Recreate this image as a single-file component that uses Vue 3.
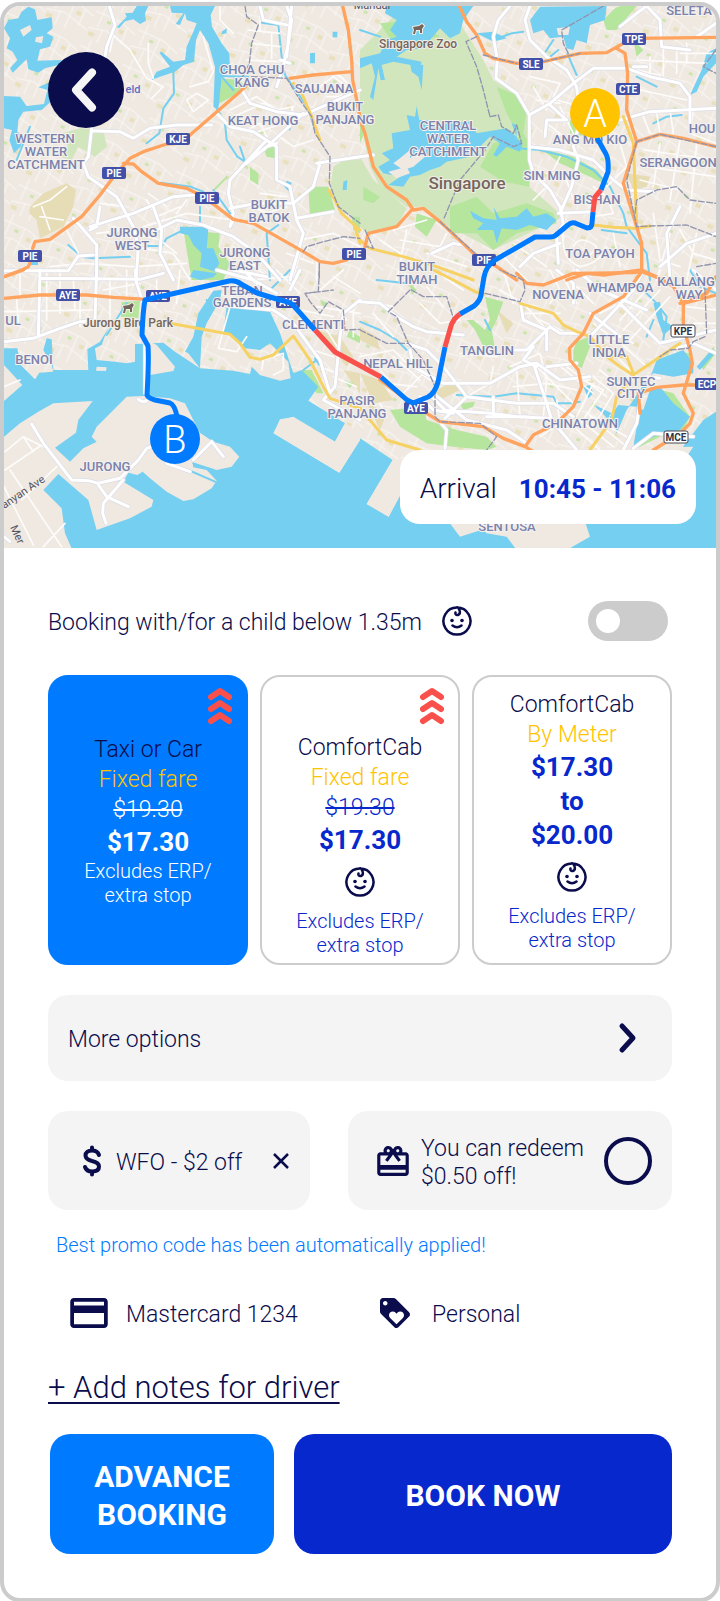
<template>
  <main class="booking">
    <section class="booking__map">
      <svg class="map" viewBox="4 6 712 542" role="img" aria-label="Route map">
        <defs>
          <pattern id="streets" width="46" height="38" patternUnits="userSpaceOnUse" patternTransform="rotate(24)">
            <path d="M0 9H28L46 15M0 27L18 23 46 30M8 0V23M24 9V38M36 12V30M14 23V38" fill="none" stroke="#f9f6f2" stroke-width="1" />
            <path d="M29 16h5v4h-5zM2 30h6v4h-6z" fill="#e9e0bd" />
            <path d="M15 13h4v3h-4z" fill="#cfe5b0" />
          </pattern>
        </defs>
        <rect class="map__land" x="0" y="0" width="720" height="560" />
        <rect class="map__streets" x="0" y="0" width="720" height="560" />
        <g v-for="layer in layers" :key="layer.name" :class="'map__' + layer.name">
          <path v-for="tile in tiles" :key="tile.id" :d="tile[layer.key]" :transform="`translate(${tile.x} ${tile.y}) scale(.33333)`" />
        </g>

        <g v-for="s in shields" :key="s.text + s.x" :class="['map__shield', { 'map__shield--white': s.white }]">
          <rect :x="s.x - 12" :y="s.y - 6" width="24" height="12" rx="2" />
          <text :x="s.x" :y="s.y + 4">{{ s.text }}</text>
        </g>
        <g class="map__labels">
          <text v-for="l in labels" :key="l[0] + l[1] + l[2]" :x="l[1]" :y="l[2]">{{ l[0] }}</text>
        </g>
        <g class="map__places">
          <text x="418" y="48">Singapore Zoo</text>
          <text x="128" y="327">Jurong Bird Park</text>
          <text class="map__country" x="467" y="189">Singapore</text>
          <path d="M413 27l6-1 3-2 2 2-2 3v4h-2v-3h-4l-1 4h-2l1-4z" />
          <path d="M123 306l6-1 3-2 2 2-2 3v4h-2v-3h-4l-1 4h-2l1-4z" />
        </g>
        <text class="map__field" x="133" y="93">eld</text>
        <text class="map__street" x="372" y="9">Mandai</text>
        <text class="map__street" transform="translate(25 495) rotate(-34)">anyan Ave</text>
        <text class="map__street" transform="translate(14 536) rotate(66)">Mer</text>

        <g class="map__route">
          <path d="M597 138L606 154Q609 160 608 172L601 190M593 212L592 223Q592 228 587 228L575 223Q571 222 568 225L556 235Q554 237 550 237H535L495 260Q486 266 484 277L481 295Q480 301 474 306L460 314M445 347L438 382Q435 393 428 397L413 403 407 400 381 377M315 330L293 305Q290 302 280 300L257 293 241 284Q236 280 229 281L145 300Q143 310 142 335L148 346Q149 360 147 395 148 398 155 400L170 403Q175 405 177 417" />
          <path class="map__route--busy" d="M601 190L595 197 593 212M460 314Q453 319 451 326L445 347M381 377L335 352 315 330" />
        </g>
        <g class="map__pin">
          <circle cx="595" cy="113" r="25" fill="#ffc300" />
          <text x="595" y="127">A</text>
          <circle cx="175" cy="439" r="25" fill="#007aff" />
          <text x="175" y="453">B</text>
        </g>
      </svg>
      <button class="booking__back" type="button" aria-label="Back">
        <svg width="76" height="76" viewBox="0 0 76 76">
          <path d="M44 20.500L28 38 44 55.500" fill="none" stroke="#f5f5f5" stroke-width="8" stroke-linecap="round" stroke-linejoin="round" />
        </svg>
      </button>
      <p class="booking__arrival">Arrival <strong>10:45 - 11:06</strong></p>
    </section>

    <section class="booking__sheet">
      <div class="child">
        <label for="child" class="child__label">Booking with/for a child below 1.35m</label>
        <svg class="baby" viewBox="0 0 30 30"><path :d="babyPath" /><circle cx="10" cy="14.500" r="1.800" /><circle cx="20" cy="14.500" r="1.800" /></svg>
        <input id="child" v-model="withChild" class="child__switch" type="checkbox" role="switch">
      </div>

      <div class="fares">
        <button v-for="fare in fares" :key="fare.id" type="button" :aria-pressed="selected === fare.id"
          :class="['fare', { 'fare--active': selected === fare.id, 'fare--low': fare.surge && fare.baby }]" @click="selected = fare.id">
          <svg v-if="fare.surge" class="fare__surge" viewBox="0 0 24 38">
            <path d="M3 10L12 4 21 10M3 22L12 16 21 22M3 34L12 28 21 34" />
          </svg>
          <span class="fare__name">{{ fare.name }}</span>
          <span class="fare__type">{{ fare.type }}</span>
          <s v-if="fare.old" class="fare__old">{{ fare.old }}</s>
          <strong v-for="p in fare.price" :key="p" class="fare__price">{{ p }}</strong>
          <svg v-if="fare.baby" class="baby fare__baby" viewBox="0 0 30 30"><path :d="babyPath" /><circle cx="10" cy="14.500" r="1.800" /><circle cx="20" cy="14.500" r="1.800" /></svg>
          <small class="fare__note">Excludes ERP/<br>extra stop</small>
        </button>
      </div>

      <button class="more" type="button">
        <span class="more__text">More options</span>
        <svg width="20" height="32" viewBox="0 0 20 32"><path d="M4 4L15 16 4 28" fill="none" stroke="#0a0c4c" stroke-width="5" stroke-linecap="round" stroke-linejoin="round" /></svg>
      </button>

      <div class="promos">
        <div class="promo">
          <svg width="20" height="32" viewBox="0 0 20 32"><path d="M17 10C16 7 13.500 5.500 10 5.500 6 5.500 3.500 7.500 3.500 10.500 3.500 13.500 6 15 10 16 14.500 17 17 18.500 17 21.500 17 24.500 14.500 26.500 10 26.500 6.500 26.500 4 25 3 22M10 2.500V5.500M10 26.500V29.500" fill="none" stroke="#0a0c4c" stroke-width="4" stroke-linecap="round" /></svg>
          <span class="promo__text">WFO - $2 off</span>
          <button class="promo__remove" type="button" aria-label="Remove promo">
            <svg width="18" height="18" viewBox="0 0 18 18"><path d="M2 2L16 16M16 2L2 16" stroke="#0a0c4c" stroke-width="2.500" /></svg>
          </button>
        </div>
        <div class="promo promo--redeem">
          <svg width="32" height="30" viewBox="2 2 20 19"><path fill="#0a0c4c" d="M20 6h-2.180c.110-.310.180-.650.180-1 0-1.660-1.340-3-3-3-1.050 0-1.960.540-2.500 1.350l-.500.670-.500-.680C10.960 2.540 10.050 2 9 2 7.340 2 6 3.340 6 5c0 .350.070.690.180 1H4c-1.110 0-1.990.890-1.990 2L2 19c0 1.110.890 2 2 2h16c1.110 0 2-.890 2-2V8c0-1.110-.890-2-2-2zm-5-2c.550 0 1 .450 1 1s-.450 1-1 1-1-.450-1-1 .450-1 1-1zM9 4c.550 0 1 .450 1 1s-.450 1-1 1-1-.450-1-1 .450-1 1-1zm11 15H4v-2h16v2zm0-5H4V8h5.080L7 10.830 8.620 12 11 8.760l1-1.360 1 1.360L15.380 12 17 10.830 14.920 8H20v6z" /></svg>
          <label for="redeem" class="promo__text">You can redeem $0.50 off!</label>
          <input id="redeem" v-model="redeem" class="promo__check" type="checkbox">
        </div>
      </div>
      <p class="hint">Best promo code has been automatically applied!</p>

      <div class="payment">
        <button class="payment__item" type="button">
          <svg width="38" height="30" viewBox="2 4 20 16"><path fill="#0a0c4c" d="M20 4H4c-1.110 0-1.990.890-1.990 2L2 18c0 1.110.890 2 2 2h16c1.110 0 2-.890 2-2V6c0-1.110-.890-2-2-2zm0 14H4v-6h16v6zm0-10H4V6h16v2z" /></svg>
          <span class="payment__text">Mastercard 1234</span>
        </button>
        <button class="payment__item payment__item--trip" type="button">
          <svg width="30" height="30" viewBox="2 2 20 20"><path fill="#0a0c4c" d="M21.410 11.580l-9-9C12.050 2.220 11.550 2 11 2H4c-1.100 0-2 .900-2 2v7c0 .550.220 1.050.590 1.420l9 9c.360.360.860.580 1.410.580.550 0 1.050-.220 1.410-.590l7-7c.370-.360.590-.860.590-1.410 0-.550-.230-1.060-.590-1.420zM5.500 7C4.670 7 4 6.330 4 5.500S4.670 4 5.500 4 7 4.670 7 5.500 6.330 7 5.500 7zm11.770 8.270L13 19.540l-4.270-4.270C8.280 14.810 8 14.190 8 13.500c0-1.380 1.120-2.500 2.500-2.500.690 0 1.320.280 1.770.740l.730.720.730-.730c.450-.450 1.080-.730 1.770-.730 1.380 0 2.500 1.120 2.500 2.500 0 .690-.280 1.320-.730 1.770z" /></svg>
          <span class="payment__text">Personal</span>
        </button>
      </div>

      <a class="notes" href="#notes">+ Add notes for driver</a>

      <div class="actions">
        <button class="actions__button actions__button--advance" type="button">ADVANCE BOOKING</button>
        <button class="actions__button" type="button">BOOK NOW</button>
      </div>
    </section>
  </main>
</template>


<script setup>
import { ref } from "vue"

const withChild = ref(false)
const redeem = ref(false)
const selected = ref("taxi")

const fares = ref([
  { id: 'taxi', name: 'Taxi or Car', type: 'Fixed fare', old: '$19.30', price: ['$17.30'], surge: true, baby: false },
  { id: 'fixed', name: 'ComfortCab', type: 'Fixed fare', old: '$19.30', price: ['$17.30'], surge: true, baby: true },
  { id: 'meter', name: 'ComfortCab', type: 'By Meter', old: '', price: ['$17.30', 'to', '$20.00'], surge: false, baby: true }
])

// face outline, curl and smile
const babyPath = 'M15 1.500A13.500 13.500 0 1 1 14.900 1.500M15.500 1.500C18 3 19 8 16 9 14 9.500 13 8 13.500 6.500M10.500 19.500Q15 23 19.500 19.500'

// drawn bottom to top, the key is the path of each tile
const layers = [
  { name: 'dry', key: 'dry' },
  { name: 'forest', key: 'forest' },
  { name: 'park', key: 'park' },
  { name: 'water', key: 'water' },
  { name: 'land', key: 'island' },
  { name: 'creek', key: 'creek' },
  { name: 'minor', key: 'minor' },
  { name: 'casing', key: 'road' },
  { name: 'road', key: 'road' },
  { name: 'yellow', key: 'yellow' },
  { name: 'express', key: 'express' },
  { name: 'rail', key: 'rail' }
]

// each tile is 360 wide and 270 or 280 high, paths use 3 units per pixel
const tiles = [
  {
    id: 'nw', x: 0, y: 0,
    dry: 'M90 620L130 580 200 550 228 570 220 620 190 680 120 715 110 660 88 640Z',
    forest: 'M185 400L240 385 310 390 320 440 285 470 235 440 215 480 180 470 205 440ZM1000 500L1030 480 1080 478V670L1020 625 990 570Z',
    park: 'M655 235L720 240 740 265 650 315ZM925 560L985 560 1005 630 930 650ZM550 690L660 700 655 740 690 790 670 840H575ZM790 440L830 430 825 475 800 470ZM750 500L775 520 775 555 750 540ZM1055 650H1080V700L1060 690ZM640 568L680 528 684 532 646 570Z',
    water: 'M12 85L25 60 55 55 65 35 85 20 105 28 112 60 155 52 158 85 140 100 160 110 150 140 120 148 112 182 185 180 175 195 135 205 115 218 85 208 80 178 38 218 30 205 52 180 38 155 20 145 30 115ZM12 288L60 290 80 318 132 312 142 270 115 262 145 248 155 255 152 305 125 330 70 335 55 360 52 395 70 410 62 440 42 460 28 420 36 390 12 385ZM350 82L380 50 375 40 398 38 410 18H445L435 40 438 62 420 72 400 58 375 64 358 84ZM510 18H645L632 45 636 80 665 130 688 160 690 215 665 230 655 330 640 320 645 200 625 130 600 90 588 120 582 185 550 195 525 215 480 230 455 240 470 215 510 200 478 158 485 155 520 185 555 180 560 140 580 95 590 70 560 60 555 40 540 75 527 72 550 40 515 38ZM665 95L680 85 680 100 665 103ZM998 95H1012V112H998ZM930 160L945 158 945 190 930 190ZM540 680L610 680 625 690 620 745 640 745 658 790 645 815 600 800 605 760 580 735 565 705 540 700ZM860 542L875 548 868 575 852 560ZM1030 545L1042 540 1040 570 1028 570ZM860 370L875 378 870 392 860 385ZM92 785H114V795H92Z',
    island: 'M60 90L90 75 95 90 70 110ZM108 112L130 108 126 130 105 125Z',
    creek: 'M520 215L522 280 490 325 478 400 440 430M645 315L675 370 680 420 712 470 735 485M785 68L835 75 845 170 855 225 925 325 945 390M660 228L745 230M665 230L700 270M480 548L575 560M600 620L600 670M440 738L485 738 500 715 540 695M205 735L245 770 280 775 390 770M720 440L735 485M570 560L610 575M640 570L690 640M810 840L800 700 835 675M50 480L90 380',
    minor: 'M660 10V60L700 100M330 155L340 105 390 150 440 235 490 260 455 295M445 130V190L460 235M745 90L840 100M755 130L840 140M740 180L840 185M780 90V60M815 100V175M690 330L770 290 830 330 880 320M700 350L790 310 860 345M690 370L760 400 850 370 880 350 875 320M740 390L780 370 800 410M570 260L625 245 640 215 610 110M560 300L590 280 625 300 580 335ZM300 610L370 620 380 650 310 670M440 600L470 650 540 620M430 680L560 640 700 660M400 740L520 760 570 840M150 800L250 790 400 800 560 790M200 690L240 770M340 680L430 710M960 260L1000 230 1040 260 1020 290 980 290M980 220Q1020 215 1040 250M900 720L1000 700 1080 740M860 760L940 790M700 740L800 830M880 830L900 760M950 840V780M780 580L860 590M760 620L800 640 860 620M840 410L880 440 940 420M100 620L150 600 200 560M120 650L190 660M125 620L150 690M530 640L560 600M445 580L500 620M290 700L370 690 480 720 530 760',
    road: 'M328 18L345 75 320 140 310 200M275 385L265 470 250 490 265 530 350 590 400 680 415 740 408 840M275 392L360 395 400 415 450 385 530 375 635 375M650 340L690 380 760 395 830 440 830 540 870 560 880 610 770 610 690 625M740 490L800 440 830 430M800 420L690 540 685 580 700 640 690 680 700 660M910 340L790 450M860 18L875 60 865 130 850 200 830 260M875 18L860 170M725 270L750 310 830 335 910 345 1080 270M220 655L290 735V840M12 812L205 812 235 768 280 765M270 680L400 640 520 590 640 580M470 690L530 660 610 675 700 710 770 760 840 840M460 620L485 690 480 760 520 840M880 610L890 660 910 700 870 840M950 490L1080 470M780 18L790 60 860 75M890 655L1000 635M960 490L940 560 880 610M300 620L290 680 270 690M840 180L870 190',
    yellow: 'M880 250L905 280 935 350 960 420M985 570L1005 600 1025 640 1080 690M1065 680L1080 730',
    express: 'M1028 18L1045 90 1055 180 1058 240 1080 350M870 235L940 225 1055 215M740 255L720 275 570 405 530 430 500 432 430 455 390 475 345 525 300 585 245 650 150 718 105 725 98 745M98 770L85 800 70 808 12 830M370 490L400 492 425 515 475 550 560 565 600 585 650 620 700 658 760 670 840 715 910 755 960 785 1000 790 1040 780',
    rail: 'M735 18L740 50 775 75 755 130 748 190 725 235M755 230L860 235 900 300 935 350 945 400 990 470 988 550 1015 620 1080 670M910 755L920 740 970 725 1030 710 1080 715M958 790V840'
  },
  {
    id: 'ne', x: 360, y: 0,
    dry: 'M350 640L410 690 400 730 340 700ZM800 520L870 530 860 560 820 570Z',
    forest: 'M0 150L120 30 300 70 370 180 400 240 480 290 510 350 508 560 610 650 400 750 240 665 190 620 140 620 60 560 30 500 0 360ZM0 470L40 540 140 625 110 680 20 700 0 680Z',
    park: 'M60 70L170 60 240 110 100 130ZM410 260L480 290 500 330 490 400 508 430V560L430 545 360 500 400 430 480 410 440 340ZM270 620L350 590 400 640 500 610 580 640 590 670 470 700 400 750 350 700 270 700ZM730 60L765 25 780 18H830L770 90 740 90ZM630 360L680 380 680 410 630 400ZM540 445L640 470 710 510 750 560 690 530 600 490ZM170 640L230 660 200 710 165 680ZM10 560L60 590 40 610 10 600ZM820 120L850 150 830 170ZM0 330L12 400 0 430Z',
    water: 'M80 18H340L310 60 300 100 270 115 240 85 210 120 190 145 140 150 110 170 185 185 180 200 100 185 65 195 75 240 62 240 55 205 40 300 30 290 45 230 35 190 0 205V175L60 160 80 120 110 110 90 90 110 60 75 40ZM150 190L190 195 185 270 175 230 155 215ZM510 60L540 20 740 18 735 60 690 75 680 130 650 120 640 150 620 145 610 110 570 115 550 90 520 100ZM95 400L150 390 140 345 165 350 170 318 178 360 210 360 190 375 330 365 350 400 440 385 470 410 455 370 470 375 470 415 488 430 480 455 440 440 410 470 400 465 420 430 390 410 360 440 330 470 260 485 240 500 210 510 180 525 150 530 130 560 85 555 120 530 70 520 55 500 90 480 65 460 100 445ZM330 632L370 655 410 660 400 620 420 655 470 650 500 625 520 650 560 640 590 660 560 690 510 675 470 690 425 685 410 730 400 690 350 690 370 670 340 655ZM350 100L400 95 440 115 400 125ZM1040 160L1068 145V190L1030 230 1010 275 990 285 1025 210Z',
    island: 'M120 475L150 450 150 475 190 440 195 470 160 500 130 510 100 490ZM85 515L140 500 150 520 110 535ZM590 85L630 80 625 105 595 105Z',
    creek: 'M580 120L550 165M595 150L570 170M622 160L650 225M475 445L540 450 620 470 700 510 750 560 790 640 800 680 860 760 870 840M400 120L455 100 490 95M880 370L920 350 965 345M830 230L890 260M725 690L800 700M0 90L60 110',
    minor: 'M510 230L600 250 580 290M530 300L600 310M520 260L560 330M600 320L640 400M590 300L700 330M560 370L600 400 590 430M780 430L800 500 740 560M850 350L870 400M890 340L900 400M930 330L940 400M840 270L980 300M830 180L1040 190M830 210L900 225M870 170V230M910 140V225M950 150V220M980 130V190M960 160H1068M1000 330L990 400 1068 430M850 450L1068 480M860 500L1068 530M840 540L960 570M900 430L880 560M960 420L930 600M1010 430L990 640M560 520L620 540 640 600M540 510L560 560 520 600M580 510L600 470M700 560L740 590 760 640 700 650M610 690Q600 780 660 800 720 790 740 740M640 740Q660 700 710 740 690 780 650 770M760 700L780 800M100 690L200 660M120 720L240 740 260 700M60 720L180 800M140 690L110 840M200 760L320 800M880 640L900 780 960 800M960 690L1000 760 1068 780M930 700L890 840M1010 700L980 840M420 760L500 840M460 730L560 800',
    road: 'M450 18L415 60 400 110 412 180 408 235 470 280 508 345V480L520 520 570 570 600 620 610 670 590 710 595 790M510 440L600 450 700 480 760 540 800 570M508 345L570 310 640 250 700 205 800 205 870 230 960 250 990 290V400M510 18L495 60 510 120 560 170 620 210 650 260M650 260L660 360 640 440 655 480 635 560 600 640M570 315L620 360 560 360 555 410M780 80L830 40 860 18 900 60 905 140 990 150M780 360L870 335 1068 325M1068 70L1010 110M800 570L880 575M960 620L920 700 930 840M820 200L860 200M600 730L520 760 480 800M215 760L280 730 310 735M1068 700L980 730 900 800M595 640L700 635M0 470L40 465',
    yellow: 'M700 675L760 682 825 685 870 678M0 720L30 745 130 770 230 800 340 840M790 350L820 430 830 670',
    express: 'M298 18L320 65 350 105 375 160 400 175 470 190 550 185 660 160 740 158 790 130 830 115 1068 112M770 145L795 160 803 220 800 330 830 425M830 425L900 403 970 415 1068 440M830 425L790 550 830 680 845 730 845 810 730 825 680 820 620 840M845 810L910 840M0 360L15 400 40 500 80 560 140 600 160 630 190 625 240 665 340 760 410 800 470 840M155 630L110 680 25 700 15 740',
    rail: 'M350 110L318 125 350 200 370 270 390 350M370 165L470 190M550 185L660 160M730 18L640 70 605 90 610 130 625 160M390 350L415 345 425 380 460 400 470 375 485 430 460 440 400 410 375 450 300 540 250 660M830 425L900 403 1068 440M830 425L800 540 830 680 870 678 980 675 1068 710M825 640L830 600 890 570 950 560 990 600 1068 610M240 665L345 760M1068 150L1030 200 1068 220M15 690L40 745 20 740M1010 800L1068 790'
  },
  {
    id: 'sw', x: 0, y: 270,
    dry: 'M950 180L1020 200 1060 260 1040 290ZM1080 310L1030 300 1080 370Z',
    forest: '',
    park: 'M365 97L420 92 415 145 362 140ZM570 0H670L650 30 600 30ZM905 300L935 300 970 370 950 370ZM1050 180L1080 200V220L1040 200ZM1030 330L1060 340 1050 355ZM960 90L985 100 970 110Z',
    water: 'M12 235L52 235 62 285 105 328 118 308 160 305 155 285 130 240 140 205 155 208 160 300 265 300 262 238 300 215 325 175 312 205 305 225 285 235 290 270 345 275 380 280 405 275V222L490 218 525 245 600 295 565 250 555 245 580 200 595 130 640 62 665 60 660 90 620 160 605 200 600 295 700 302 750 312 755 290 780 315 840 332 872 325 865 275 810 220 780 240 735 235 695 195 670 190 680 108 810 125 840 190 865 265 880 310 905 300 955 350 925 392 1035 460 1005 515 880 440 840 450 820 490 1018 608 1080 510V840H12ZM580 0L650 10 640 22 600 30 570 20Z',
    island: 'M822 490L840 448 880 442 1005 515 1035 460 1080 485V510L1018 608ZM12 285L67 345 12 393ZM450 215L470 225 525 290 520 303 450 315ZM290 290L320 292 318 303 288 302ZM785 280L850 270 855 310 820 320 785 300ZM12 500L60 460 115 425 160 400 278 393 235 450 228 488 165 533 210 575 250 535 290 515 275 500 290 470 380 380 430 378 510 385 555 400 580 450 600 488 640 515 690 530 718 560 695 590 650 600 578 580 580 592 620 600 650 632 635 655 580 688 550 693 500 665 450 625 428 605 412 615 385 608 370 635 460 690 455 710 390 745 290 780 265 690 175 612 130 660 185 715 195 790 217 840H12Z',
    creek: 'M320 195L380 100M580 580L640 600M565 600L645 635M870 0L810 60M945 265L975 310M910 300L950 270M620 90L640 110',
    minor: 'M60 0V80M140 0V150M180 0V130M220 30L225 120M330 30V150M380 0V80M470 30V100M12 125L280 120M50 90L55 160M240 60V170M540 0L530 100M655 235L690 110 720 110M655 235L710 245 740 200M785 300L790 270 850 250 850 300 820 315M830 0L900 70M760 30L870 20M900 120L1000 140M940 240L1000 260M960 290L1010 310M1000 320L1070 350M980 180L1030 260M1040 150L1010 110M950 110L1080 130M1030 0L960 60M12 350L60 330M15 600L125 525M15 545L70 500 130 530M70 500L100 545M30 600L185 830M12 650L100 825M65 690L170 590M130 830L195 760M310 60L420 40M1060 120V200M1000 20L1080 70',
    road: 'M95 462L130 520 215 630 265 632 295 640 360 625 415 570 440 535 520 505M295 645L320 680 385 710M370 630L310 700 308 730 318 760M500 580L570 605M580 570L635 515 670 560M290 0L285 150M120 0L115 200M12 215L100 205 180 175 240 155 290 150M120 25L420 28 490 10M405 0L410 40 430 100M435 210V370M415 388Q425 400 440 392M660 105L820 120 880 160 930 230 960 270 990 370M650 0L760 30 830 70M1080 90L1030 130 1020 200 1005 350 970 390 1080 450M12 800L30 815M730 0L770 40M870 60L900 0M700 0L800 20',
    yellow: 'M510 160L690 193 720 220 750 262 780 268 820 255 880 198 930 270 970 350 990 385 1080 415',
    express: 'M12 20L70 0M12 85L120 75 260 75 340 82 440 88',
    rail: 'M958 0L955 65 915 70 930 95 960 130 985 95 1030 120 1035 180 1080 178M918 70L1000 60'
  },
  {
    id: 'se', x: 360, y: 270,
    dry: 'M0 310L60 330 100 390 40 400ZM0 170L50 200 60 240 0 210ZM210 370L290 330 300 360 220 400ZM410 120L460 160 440 190ZM20 400L80 430 60 480Z',
    forest: '',
    park: 'M375 80L430 95 410 150 395 180 405 235 370 230 345 180 320 150 340 150 375 180 390 150ZM650 215L685 200 690 230 665 295 640 280 640 240ZM90 420L190 410 200 450 290 480 380 500 410 530 380 540 280 530 200 520 120 470ZM870 350L940 370 990 440 970 480 920 460 880 410ZM850 450L930 460 970 480 900 500 820 540 830 480ZM480 780L540 740 600 730 650 780 630 835H490ZM950 245L990 250 985 290 960 280ZM150 40L170 60 155 75ZM300 400L345 395 340 410 310 420ZM1020 280L1060 230 1068 250 1030 300ZM300 720L420 750 370 770Z',
    water: 'M0 505L98 570 20 702 86 740 150 620H900L1030 450 1068 425V840H0ZM880 100L900 95 910 150 940 170 910 195 890 140ZM890 270L970 240 1000 280 1000 310 940 320 880 310 860 330 800 420 770 490 750 440 775 405 830 410 860 350ZM830 410L850 420 870 360 900 350 940 400 990 440 960 480 880 500 820 530 830 470ZM1010 290L1050 245 1060 255 1020 300ZM670 350L690 345 700 370 685 385ZM715 410L755 430 740 445ZM525 790L560 760 580 800 570 820Z',
    island: 'M98 570L300 540 1000 530 960 590 300 800 180 640 150 620 86 740 20 702ZM770 490L800 470 830 440 820 500 790 520ZM300 720L650 680 690 800 620 840H470L440 800 380 790Z',
    creek: 'M50 30L140 40M0 155L60 180 110 210 140 240M290 375L400 380 470 370 580 380 590 400 630 400 660 395M840 50L890 100 920 140 910 210M710 410L745 440M880 150L860 200M990 0L1020 50 1068 70M375 150L390 180',
    minor: 'M420 60L490 100 560 180M430 0L460 100M250 20L310 60M0 90L100 110M40 130L100 200M180 100L240 160 300 150M200 50L250 110M300 250L410 260M400 290L390 340 320 380M330 420L420 440M430 250L520 230M450 290L540 250M460 350L560 340 650 360M470 300L480 440M520 280L640 400M540 250L560 330 550 440M590 280L700 370M620 290L740 380M600 330H690M650 320L730 360M740 230L830 320M770 210L860 290M790 180L900 60M810 210L930 80M780 150L850 70M760 180L820 220M720 130L800 90M700 160L780 220M700 340L650 440M730 360L670 450M760 370L700 470M660 450L760 530M690 440L800 530M630 460L720 540M590 390L600 460 540 500M960 60L1068 80M980 110L1068 120M1000 160L1068 160M1010 0L1030 60M0 260L100 240 140 280M60 300L120 370M100 260L180 330M80 340L170 350M140 280L210 330M200 300L120 380M60 400L80 440M570 0L600 60 570 100M610 20L650 100M490 130L600 130M540 150L620 190M650 50L700 100M640 0L700 40M720 300L780 350M700 320L760 370M680 430L800 500',
    road: 'M0 95L60 100 110 140 160 170 200 185 310 195M140 220L200 240 250 290 320 380M150 240L160 290 250 340 390 340 480 290 530 280 600 330 690 320M220 370L320 450 440 480 500 520M320 380L470 400 580 400 640 440M180 380L220 420 280 430M215 380L255 420 390 430 470 440 570 445M320 380L255 445M380 440L500 440M460 240L500 240 570 170 600 190 660 190M520 230L490 270 530 290M590 0L640 40 640 100M230 445L260 480 255 535M480 90L490 150 560 180 560 240M560 290L650 280M780 100L900 220 1068 180M1068 250L1000 220 930 240M650 0L720 60 860 120M840 400L830 460 790 540M860 320L900 325M820 535L880 490 1000 500M850 0L820 60 690 200M1000 0L1068 60M560 400L575 450 650 540M690 130L780 200M400 430V380M520 280L560 400',
    yellow: 'M220 0L280 30 345 65 370 75M480 100L580 130 610 165 650 185 690 200 740 260 780 290 820 315 960 220M820 315L770 380 755 450 690 540M740 260L800 260 820 310M0 415L80 510 180 540M690 540L740 470',
    express: 'M470 10L500 40 550 45 640 10 820 8 845 5 900 25 940 50 970 100 970 170 990 240 997 280 970 370 1000 430 990 460 960 490 880 540M970 100L1068 75M845 5L790 80 700 130 670 190 628 235 630 270 655 300 665 350 640 410 600 450 560 475 520 495 495 530 430 505 370 470 240 455 160 405 60 330M495 530L530 550M840 430L835 370 890 352 970 345 1068 345M960 100L1040 70 1068 20',
    rail: 'M375 70L480 95 495 60 490 30 420 0M0 180L80 220 145 220 190 270 225 350 225 440 240 455 360 460 410 500 380 540M150 60L85 125 110 140 145 220M155 60L190 80 260 80 285 160M1010 10L1035 60 1040 190M1035 200L1000 215 985 235 930 240 900 260'
  }
]

const labels = [
  ['CHOA CHU', 252, 74], ['KANG', 252, 87], ['SAUJANA', 324, 93], ['BUKIT', 345, 111], ['PANJANG', 345, 124],
  ['KEAT HONG', 263, 125], ['WESTERN', 45, 143], ['WATER', 46, 156], ['CATCHMENT', 46, 169],
  ['BUKIT', 269, 209], ['BATOK', 269, 222], ['JURONG', 132, 237], ['WEST', 132, 250], ['JURONG', 245, 257], ['EAST', 245, 270],
  ['SELETA', 689, 15], ['CENTRAL', 448, 130], ['WATER', 448, 143], ['CATCHMENT', 448, 156], ['ANG MO KIO', 590, 144],
  ['HOU', 702, 133], ['SERANGOON', 678, 167], ['SIN MING', 552, 180], ['BISHAN', 597, 204], ['TOA PAYOH', 600, 258],
  ['BUKIT', 417, 271], ['TIMAH', 417, 284], ['TEBAN', 242, 295], ['GARDENS', 242, 307], ['CLEMENTI', 313, 329],
  ['UL', 13, 325], ['BENOI', 34, 364], ['JURONG', 105, 471], ['PASIR', 357, 405], ['PANJANG', 357, 418], ['NEPAL HILL', 398, 368],
  ['NOVENA', 558, 299], ['WHAMPOA', 620, 292], ['KALLANG', 686, 286], ['WAY', 689, 299], ['LITTLE', 609, 344], ['INDIA', 609, 357],
  ['TANGLIN', 487, 355], ['SUNTEC', 631, 386], ['CITY', 631, 398], ['CHINATOWN', 580, 428], ['SENTOSA', 507, 531]
]

const shields = [
  { text: 'KJE', x: 178, y: 139 }, { text: 'PIE', x: 114, y: 173 }, { text: 'PIE', x: 207, y: 198 }, { text: 'PIE', x: 30, y: 256 },
  { text: 'PIE', x: 354, y: 254 }, { text: 'PIE', x: 484, y: 260 }, { text: 'SLE', x: 531, y: 64 }, { text: 'TPE', x: 634, y: 39 },
  { text: 'CTE', x: 628, y: 89 }, { text: 'AYE', x: 68, y: 295 }, { text: 'AYE', x: 158, y: 296 }, { text: 'AYE', x: 288, y: 302 },
  { text: 'AYE', x: 416, y: 408 }, { text: 'ECP', x: 707, y: 384 }, { text: 'KPE', x: 683, y: 331, white: true }, { text: 'MCE', x: 676, y: 437, white: true }
]
</script>


<style>
body {
  background-color: #ffffff;
}
</style>

<style scoped>
.booking {
  box-sizing: border-box;
  min-height: calc(100vh - 2px);
  margin-top: 2px;
  border: 4px solid #cccccc;
  border-radius: 20px;
  overflow: hidden;
  background-color: #ffffff;
  color: #0a0c4c;
  font-family: Roboto, "Liberation Sans", sans-serif;
  font-size: 23px;
  font-weight: 300;
  line-height: 30px;
}

button {
  padding: 0;
  border: none;
  background: none;
  color: inherit;
  font: inherit;
  cursor: pointer;
}

.booking__map {
  position: relative;
}

.booking__back {
  position: absolute;
  top: 46px;
  left: 44px;
  width: 76px;
  height: 76px;
  border-radius: 50%;
  background-color: #0a0c4c;
}

.booking__arrival {
  position: absolute;
  right: 20px;
  bottom: 24px;
  display: flex;
  align-items: center;
  gap: 22px;
  box-sizing: border-box;
  height: 74px;
  margin: 0;
  padding: 4px 20px 0;
  border-radius: 20px;
  background-color: #ffffff;
  font-size: 28px;
}

.booking__arrival strong {
  color: #0728cc;
  font-size: 26px;
  font-weight: 700;
}

/* map */
.map {
  display: block;
  width: 100%;
}

.map path {
  stroke-linejoin: round;
}

.map__land {
  fill: #efe9e2;
}

.map__streets {
  fill: url(#streets);
}

.map__dry {
  fill: #e6dcb6;
}

.map__forest {
  fill: #d2e6be;
}

.map__park {
  fill: #b6e59e;
}

.map__water {
  fill: #75cff0;
}

.map__creek,
.map__minor,
.map__casing,
.map__road,
.map__yellow,
.map__express,
.map__rail {
  fill: none;
  stroke-linecap: round;
}

.map__creek {
  stroke: #75cff0;
  stroke-width: 6;
}

.map__minor {
  stroke: #fdfcfb;
  stroke-width: 5;
}

.map__casing {
  stroke: #dcdde9;
  stroke-width: 13;
}

.map__road {
  stroke: #ffffff;
  stroke-width: 9;
}

.map__yellow {
  stroke: #f6d163;
  stroke-width: 9;
}

.map__express {
  stroke: #ffa35e;
  stroke-width: 10;
}

.map__rail {
  stroke: #9295ae;
  stroke-width: 4;
  stroke-dasharray: 18 7;
}

.map text {
  text-anchor: middle;
}

.map__labels text {
  fill: #7b82ab;
  stroke: #f5f2f0;
  stroke-width: 2px;
  paint-order: stroke;
  font-size: 13px;
  font-weight: 500;
}

.map__places {
  fill: #75655c;
  stroke: #f1eee5;
  stroke-width: 2px;
  paint-order: stroke;
  font-size: 12px;
  font-weight: 500;
}

.map__places .map__country {
  font-size: 17px;
}

.map__field {
  fill: #5a6fc4;
  font-size: 11px;
  font-weight: 500;
}

.map__street {
  fill: #545463;
  font-size: 11px;
  font-weight: 400;
}

.map__shield rect {
  fill: #4250a8;
}

.map__shield text {
  fill: #ffffff;
  font-size: 10px;
  font-weight: 700;
}

.map__shield--white rect {
  fill: #ffffff;
  stroke: #4b4b5c;
}

.map__shield--white text {
  fill: #333344;
}

.map__route {
  fill: none;
  stroke: #007aff;
  stroke-width: 5px;
}

.map__route--busy {
  stroke: #fa504b;
}

.map__pin text {
  fill: #ffffff;
  font-size: 38px;
  font-weight: 300;
}

/* sheet */
.booking__sheet {
  padding: 53px 44px 44px;
}

.baby {
  flex: none;
  width: 30px;
  height: 30px;
}

.baby path {
  fill: none;
  stroke: #0a0c4c;
  stroke-width: 2.500;
  stroke-linecap: round;
}

.baby circle {
  fill: #0a0c4c;
}

.child {
  display: flex;
  align-items: center;
  gap: 20px;
  padding-right: 4px;
}

.child__label,
.more__text,
.promo__text,
.payment__text {
  padding-top: 4px;
}

.child__switch {
  appearance: none;
  width: 80px;
  height: 40px;
  margin: 0 0 0 auto;
  padding: 8px;
  box-sizing: border-box;
  border-radius: 20px;
  background-color: #cccccc;
}

.child__switch::before {
  content: "";
  display: block;
  width: 24px;
  height: 24px;
  border-radius: 50%;
  background-color: #ffffff;
}

.child__switch:checked {
  background-color: #007aff;
}

.child__switch:checked::before {
  margin-left: auto;
}

.fares {
  display: grid;
  grid-template-columns: repeat(3, 1fr);
  gap: 12px;
  margin-top: 34px;
}

.fare {
  position: relative;
  display: flex;
  flex-direction: column;
  align-items: center;
  justify-content: center;
  box-sizing: border-box;
  min-height: 290px;
  padding-top: 2px;
  border: 2px solid #cccccc;
  border-radius: 20px;
}

.fare--low {
  padding-top: 50px;
}

.fare--active {
  border-color: #007aff;
  background-color: #007aff;
}

.fare__surge {
  position: absolute;
  top: 10px;
  right: 14px;
  width: 24px;
  height: 38px;
}

.fare__surge path {
  fill: none;
  stroke: #fa504b;
  stroke-width: 6;
  stroke-linecap: round;
  stroke-linejoin: round;
}

.fare__type {
  color: #ffc300;
}

.fare__old {
  color: #0728cc;
  text-decoration-thickness: 2px;
}

.fare__price {
  color: #0728cc;
  font-size: 26px;
  font-weight: 700;
  line-height: 34px;
}

.fare__baby {
  margin: 10px 0 12px;
}

.fare__note {
  color: #0728cc;
  font-size: 20px;
  line-height: 24px;
}

.fare--active .fare__old,
.fare--active .fare__price,
.fare--active .fare__note {
  color: #ffffff;
}

.more {
  display: flex;
  align-items: center;
  justify-content: space-between;
  width: 100%;
  height: 86px;
  margin-top: 30px;
  padding: 0 34px 0 20px;
  border-radius: 20px;
  background-color: #f4f4f4;
}

.promos {
  display: grid;
  grid-template-columns: 262fr 324fr;
  gap: 38px;
  margin-top: 30px;
}

.promo {
  display: flex;
  align-items: center;
  gap: 14px;
  box-sizing: border-box;
  min-height: 99px;
  padding: 0 20px 0 34px;
  border-radius: 20px;
  background-color: #f4f4f4;
}

.promo--redeem {
  gap: 12px;
  padding-left: 29px;
}

.promo__text {
  flex: 1;
  line-height: 28px;
}

.promo svg {
  display: block;
  flex: none;
}

.promo__check {
  appearance: none;
  flex: none;
  width: 48px;
  height: 48px;
  margin: 0;
  border: 4px solid #0a0c4c;
  border-radius: 50%;
}

.promo__check:checked {
  background-color: #007aff;
}

.hint {
  margin: 20px 8px 0;
  color: #007aff;
  font-size: 20px;
}

.payment {
  display: grid;
  grid-template-columns: 310fr 292fr;
  margin-top: 36px;
  padding-left: 22px;
}

.payment__item {
  display: flex;
  align-items: center;
  gap: 18px;
}

.payment__item--trip {
  gap: 22px;
}

.notes {
  display: inline-block;
  margin-top: 38px;
  color: inherit;
  font-size: 31px;
  line-height: 40px;
  text-decoration-thickness: 2px;
  text-underline-offset: 4px;
}

.actions {
  display: grid;
  grid-template-columns: 224fr 378fr;
  gap: 20px;
  margin-top: 26px;
  padding-left: 2px;
}

.actions__button {
  min-height: 120px;
  padding: 4px 40px 0;
  border-radius: 20px;
  background-color: #0728cc;
  color: #ffffff;
  font-size: 30px;
  font-weight: 700;
  line-height: 38px;
}

.actions__button--advance {
  background-color: #007aff;
}
</style>
